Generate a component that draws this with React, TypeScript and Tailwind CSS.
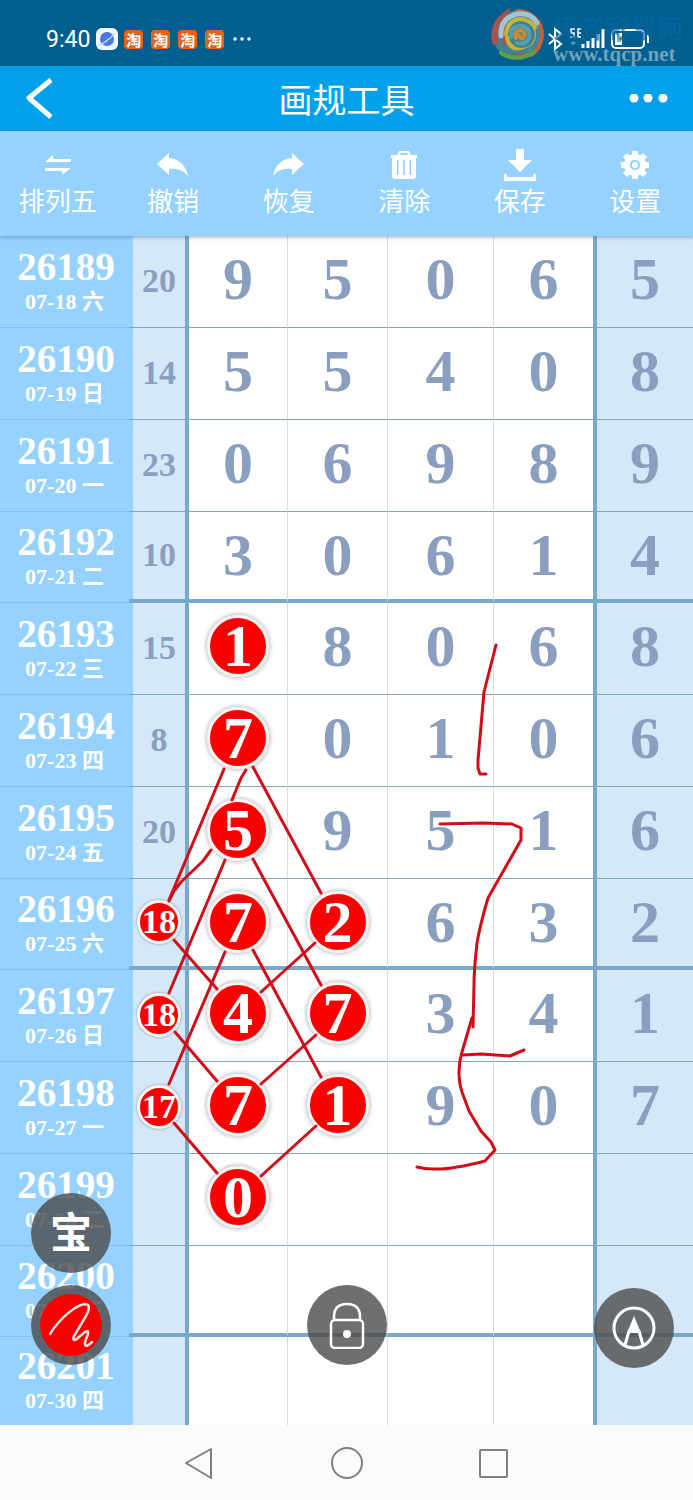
import type { ReactNode } from 'react';
import clsx from 'clsx';

interface DrawRow {
  issue: string;
  date: string;
  sum?: number;
  sumMarked?: boolean;
  digits: (number | null)[];
  marked?: number[];
}

const ROWS: DrawRow[] = [
  { issue: '26189', date: '07-18 六', sum: 20, digits: [9, 5, 0, 6, 5] },
  { issue: '26190', date: '07-19 日', sum: 14, digits: [5, 5, 4, 0, 8] },
  { issue: '26191', date: '07-20 一', sum: 23, digits: [0, 6, 9, 8, 9] },
  { issue: '26192', date: '07-21 二', sum: 10, digits: [3, 0, 6, 1, 4] },
  { issue: '26193', date: '07-22 三', sum: 15, digits: [1, 8, 0, 6, 8], marked: [0] },
  { issue: '26194', date: '07-23 四', sum: 8, digits: [7, 0, 1, 0, 6], marked: [0] },
  { issue: '26195', date: '07-24 五', sum: 20, digits: [5, 9, 5, 1, 6], marked: [0] },
  { issue: '26196', date: '07-25 六', sum: 18, sumMarked: true, digits: [7, 2, 6, 3, 2], marked: [0, 1] },
  { issue: '26197', date: '07-26 日', sum: 18, sumMarked: true, digits: [4, 7, 3, 4, 1], marked: [0, 1] },
  { issue: '26198', date: '07-27 一', sum: 17, sumMarked: true, digits: [7, 1, 9, 0, 7], marked: [0, 1] },
  { issue: '26199', date: '07-28 二', digits: [0, null, null, null, null], marked: [0] },
  { issue: '26200', date: '07-29 三', digits: [null, null, null, null, null] },
  { issue: '26201', date: '07-30 四', digits: [null, null, null, null, null] },
];

// straight links between marked numbers: x1, y1, x2, y2
const LINKS = [
  [224, 769, 169, 900],
  [253, 767, 321, 893],
  [225, 860, 169, 993],
  [253, 859, 321, 985],
  [174, 940, 217, 989],
  [315, 943, 261, 992],
  [225, 952, 169, 1084],
  [253, 950, 321, 1077],
  [175, 1032, 217, 1081],
  [316, 1035, 261, 1084],
  [174, 1123, 217, 1173],
  [316, 1126, 261, 1176],
];

const STROKES = [
  'M246 770 L241 778 L232 800',
  'M211 850 L203 861 L181 882 L174 891 L169 901',
  'M496 645 L484 692 L478 760 L478 768 L480 774 H486',
  'M440 824 L483 823 L512 824 L521 828 V840 L488 898 Q480 925 477 943 Q474 970 474 985 L473 1027',
  'M472 1018 L462 1052 Q459 1062 459 1072 Q459 1083 462 1092 L469 1111 L481 1131 L491 1142 L495 1150 L485 1161 Q450 1170 433 1169 Q424 1169 417 1167',
  'M463 1055 L481 1054 L510 1056 L524 1050',
];

const TOOLS: { label: string; icon: ReactNode }[] = [
  {
    label: '排列五',
    icon: <path d="M3 12 L11 5 V9 H29 V12 Z M29 18 L20 25 V21 H3 V18 Z" />,
  },
  {
    label: '撤销',
    icon: <path d="M0 14 L12 3 V8 C23 9 29 16 31 26 C26 20 20 18 12 19 V25 Z" />,
  },
  {
    label: '恢复',
    icon: <path d="M31 14 L19 3 V8 C8 9 2 16 0 26 C5 20 11 18 19 19 V25 Z" />,
  },
  {
    label: '清除',
    icon: (
      <path
        fillRule="evenodd"
        d="M3 5 H9 L11 1 H21 L23 5 H29 V8 H28 V26 Q28 29 25 29 H7 Q4 29 4 26 V8 H3 Z M12 5 H20 L19 3 H13 Z M9 10 V25 H10.500 V10 Z M15.200 10 V25 H16.800 V10 Z M21.500 10 V25 H23 V10 Z"
      />
    ),
  },
  {
    label: '保存',
    icon: <path d="M12 -1 H20 V10 H28 L16 22 L4 10 H12 Z M0 24 H3 V27 H29 V24 H32 V31 H0 Z" />,
  },
  {
    label: '设置',
    icon: (
      <>
        <g stroke="white" strokeWidth="6">
          <path d="M16 1 V8 M16 22 V29 M2 15 H9 M23 15 H30" />
          <path d="M6 5 L11 10 M21 20 L26 25 M26 5 L21 10 M11 20 L6 25" />
        </g>
        <circle cx="16" cy="15" r="8" fill="none" stroke="white" strokeWidth="6" />
        <circle cx="16" cy="15" r="5" fill="#96d2ff" />
        <circle cx="16" cy="15" r="3" />
      </>
    ),
  },
];

function StatusBar() {
  return (
    <div className="relative flex h-[66px] items-center bg-[#005f8f] pl-[46px] pt-3 text-white">
      <span className="font-[Roboto,sans-serif] text-[23px] leading-none">9:40</span>
      <svg viewBox="0 0 22 22" className="ml-[6px] size-[22px]">
        <rect width="22" height="22" rx="6" fill="#f3f8ff" />
        <circle cx="11" cy="11" r="7" fill="#4a78e0" />
        <path d="M3 17 Q10 15 19 5" stroke="#c3d6ff" strokeWidth="1.500" fill="none" />
      </svg>
      <div className="ml-[6px] flex gap-2">
        {[0, 1, 2, 3].map((i) => (
          <span
            key={i}
            className="flex size-[19px] items-center justify-center rounded bg-[#e0651a] font-['Noto_Sans_CJK_SC',sans-serif] text-[15px] font-bold leading-none"
          >
            淘
          </span>
        ))}
      </div>
      <svg viewBox="0 0 18 4" className="ml-[9px] h-1 w-[18px]" fill="white">
        <circle cx="2" cy="2" r="1.700" />
        <circle cx="9" cy="2" r="1.700" />
        <circle cx="16" cy="2" r="1.700" />
      </svg>

      <div className="ml-auto mr-[42px] flex items-center">
        <svg viewBox="0 0 104 24" className="h-6 w-[104px]" fill="none" stroke="white">
          <path d="M2 7 L14 17 L8 22 V2 L14 7 L2 17" strokeWidth="2" />
          <g strokeWidth="1.500">
            <path d="M28 2 H24 V6 H27 V10 H23 M34 2 H31 V10 H34 M31 6 H34" />
            <path d="M24 16 H29 M26 14 V18" stroke="#7fb0cc" strokeWidth="1" />
          </g>
          <path d="M36 21 V17 M41 21 V14 M46 21 V11 M51 21 V7 M56 21 V2" strokeWidth="3" />
          <rect x="65" y="3" width="32" height="18" rx="4" strokeWidth="2" />
          <path d="M101 8 V16" strokeWidth="2" />
          <rect x="68" y="6" width="7" height="12" fill="white" stroke="none" />
          <path d="M71 9 V15 M73 9 V15" stroke="#005f8f" strokeWidth="1" />
        </svg>
      </div>

      <div className="pointer-events-none absolute right-[10px] top-2 flex">
        <svg viewBox="0 0 54 54" className="size-[54px]" fill="none" strokeLinecap="round">
          <circle cx="27" cy="27" r="25" fill="#45808a" />
          <path d="M27 3 A24 24 0 0 1 51 27 Q50 41 40 47" stroke="#c4623c" strokeWidth="4" />
          <path d="M4 34 Q1 16 14 7 Q10 20 13 30 Q18 44 32 46" stroke="#a8524d" strokeWidth="6" />
          <path d="M10 28 Q9 10 26 6 Q40 4 46 15" stroke="#9fc5d6" strokeWidth="5" />
          <path d="M15 26 Q17 11 31 11 Q45 14 46 27 Q44 42 29 42 Q17 40 16 29" stroke="#c3b63b" strokeWidth="4" />
          <path d="M20 29 Q19 17 31 18 Q40 21 38 30 Q34 38 26 35" stroke="#4fa0b5" strokeWidth="4" />
          <path d="M25 30 Q22 23 30 22 Q36 25 32 30 Q29 31 28 27" stroke="#c98a32" strokeWidth="4" />
          <path d="M10 45 Q25 55 43 44" stroke="#5ba04c" strokeWidth="4" />
          <path d="M14 38 Q24 50 42 38 Q48 31 46 22" stroke="#3a86a8" strokeWidth="3" />
        </svg>
        <div className="ml-2 flex flex-col pt-1">
          <span className="font-['Noto_Sans_CJK_SC',sans-serif] text-[26px] font-bold leading-[30px] text-[#08659f]/70">
            天齐彩票网
          </span>
          <span className="font-['Liberation_Serif',serif] text-[21px] font-bold leading-6 text-[#8fb5c9]/80">
            www.tqcp.net
          </span>
        </div>
      </div>
    </div>
  );
}

function TitleBar() {
  return (
    <header className="flex h-[65px] items-center justify-between bg-[#00a0ea] px-6 text-white">
      <button type="button" aria-label="返回" className="w-10">
        <svg viewBox="0 0 32 44" className="h-11 w-8" fill="none" stroke="white" strokeWidth="5">
          <path d="M27 3 L5 21 L27 40" strokeLinejoin="round" />
        </svg>
      </button>
      <h1 className="text-[34px] leading-none">画规工具</h1>
      <button type="button" aria-label="更多" className="w-10">
        <svg viewBox="0 0 40 10" className="h-[10px] w-10" fill="white">
          <circle cx="5" cy="4" r="4.500" />
          <circle cx="19" cy="4" r="4.500" />
          <circle cx="34" cy="4" r="4.500" />
        </svg>
      </button>
    </header>
  );
}

function Toolbar() {
  return (
    <div className="relative z-10 grid h-[105px] grid-cols-6 bg-[#96d2ff] text-white shadow-[0_1px_4px_rgba(70,110,150,0.6)]">
      {TOOLS.map((tool) => (
        <button key={tool.label} type="button" className="flex flex-col items-center pt-[19px]">
          <svg viewBox="0 0 32 30" className="h-[30px] w-8 overflow-visible" fill="white">
            {tool.icon}
          </svg>
          <span className="mt-0.5 text-[26px] leading-9">{tool.label}</span>
        </button>
      ))}
    </div>
  );
}

function Digit({ value, marked }: { value: number | null; marked?: boolean }) {
  if (value === null) return null;
  return (
    <span
      className={clsx(
        'mx-auto flex size-[62px] items-center justify-center text-[60px] leading-none',
        marked && 'rounded-full border-3 border-[#fff4f2] bg-[#fb0000] text-white shadow-[0_0_4px_1px_rgba(90,110,120,0.45)]',
      )}
    >
      {value}
    </span>
  );
}

function TrendTable() {
  return (
    <table className="w-full table-fixed border-separate border-spacing-0 bg-white text-center font-['Liberation_Serif','Noto_Sans_CJK_SC',serif] font-bold text-[#8a9fbf]">
      <colgroup>
        <col className="w-[129px]" />
        <col className="w-[60px]" />
        <col className="w-[99px]" />
        <col className="w-[100px]" />
        <col className="w-[106px]" />
        <col className="w-[103px]" />
        <col className="w-[96px]" />
      </colgroup>
      <tbody>
        {ROWS.map((row, index) => {
          const last = index === ROWS.length - 1;
          const thick = index % 4 === 3;
          const line = last ? 'border-b-0' : thick ? 'border-b-4 border-b-[#7aa8c9]' : 'border-b border-b-[#7fa6bf]';
          return (
            <tr key={row.issue} className={last ? 'h-[88px]' : thick ? 'h-[91px]' : 'h-[92px]'}>
              <th
                scope="row"
                className={clsx('bg-[#96d2ff] p-0 text-white', !last && 'border-b border-b-[#85c0ec]')}
              >
                <span className="block pl-[3px] text-[39px] leading-10">{row.issue}</span>
                <span className="block text-[22px] leading-[30px]">{row.date}</span>
              </th>
              <td
                className={clsx(
                  'border-r-4 border-r-[#7aa8c9] bg-[#d4e8fa] p-0 pb-0.5 pl-1 text-[34px] shadow-[inset_4px_0_0_#96d2ff]',
                  line,
                )}
              >
                <span
                  className={clsx(
                    'mx-auto flex size-[44px] items-center justify-center leading-none',
                    row.sumMarked &&
                      'rounded-full border-3 border-[#fff4f2] bg-[#fb0000] text-white shadow-[0_0_2px_1px_rgba(90,110,120,0.35)]',
                  )}
                >
                  {row.sum}
                </span>
              </td>
              {row.digits.map((value, column) => (
                <td
                  key={column}
                  className={clsx(
                    'p-0',
                    thick ? 'pb-0.5' : 'pb-1.5',
                    line,
                    column < 3 && 'border-r border-r-[#d3dee3]',
                    column === 3 && 'border-r-4 border-r-[#7aa8c9]',
                    column === 4 && 'bg-[#d4e8fa]',
                  )}
                >
                  <Digit value={value} marked={row.marked?.includes(column)} />
                </td>
              ))}
            </tr>
          );
        })}
      </tbody>
    </table>
  );
}

function Drawing() {
  return (
    <svg
      viewBox="0 236 693 1189"
      preserveAspectRatio="none"
      className="pointer-events-none absolute inset-0 size-full"
      fill="none"
      stroke="#d10d18"
      strokeWidth="3"
      strokeLinecap="round"
      strokeLinejoin="round"
    >
      {LINKS.map(([x1, y1, x2, y2]) => (
        <line key={`${x1}-${y1}-${x2}`} x1={x1} y1={y1} x2={x2} y2={y2} />
      ))}
      {STROKES.map((d) => (
        <path key={d} d={d} />
      ))}
    </svg>
  );
}

function FloatingButtons() {
  return (
    <>
      <div className="absolute bottom-[60px] left-[31px] flex flex-col gap-3">
        <button
          type="button"
          className="size-20 rounded-full bg-[#4b4b4b]/80 pb-1.5 text-[42px] font-bold leading-none text-white"
        >
          宝
        </button>
        <button
          type="button"
          aria-label="画笔"
          className="flex size-20 items-center justify-center rounded-full bg-[#4b4b4b]/80"
        >
          <svg viewBox="0 0 62 62" className="size-[62px]">
            <circle cx="31" cy="31" r="31" fill="#fb0000" />
            <path
              d="M10 40 C20 24 36 11 45 10 C51 10 49 17 46 22 L34 42 C32 47 35 47 39 43 L45 38 C50 35 48 41 46 45 C43 54 47 53 52 48"
              fill="none"
              stroke="#ffe3df"
              strokeWidth="2.500"
              strokeLinecap="round"
            />
          </svg>
        </button>
      </div>
      <button
        type="button"
        aria-label="锁定"
        className="absolute bottom-[60px] left-1/2 flex size-20 -translate-x-1/2 items-center justify-center rounded-full bg-[#4b4b4b]/80"
      >
        <svg viewBox="0 0 36 48" className="h-12 w-9" fill="none" stroke="white" strokeWidth="2.500">
          <rect x="2" y="19" width="32" height="28" rx="4" />
          <path d="M5 19 V16 Q5 3 18 3 Q31 3 31 16 V19" />
          <circle cx="18" cy="33" r="4" fill="white" stroke="none" />
        </svg>
      </button>
      <button
        type="button"
        aria-label="指南针"
        className="absolute bottom-[57px] right-[19px] flex size-20 items-center justify-center rounded-full bg-[#4b4b4b]/80"
      >
        <svg viewBox="0 0 44 44" className="size-11" fill="none" stroke="white" strokeWidth="3">
          <circle cx="22" cy="22" r="20" />
          <path d="M17 25 L13 39 M27 25 L31 39" />
          <path d="M22 10 L29 27 H15 Z" fill="white" stroke="none" />
        </svg>
      </button>
    </>
  );
}

function SystemNav() {
  return (
    <nav className="flex grow items-center justify-center bg-[#fbfbfb] py-5">
      <button type="button" aria-label="后退" className="flex w-[147px] justify-center">
        <svg viewBox="0 0 34 34" className="size-[34px]" fill="none" stroke="#808080" strokeWidth="2">
          <path d="M3 17 L28 3 V32 Z" strokeLinejoin="round" />
        </svg>
      </button>
      <button type="button" aria-label="主页" className="flex w-[147px] justify-center">
        <svg viewBox="0 0 34 34" className="size-[34px]" fill="none" stroke="#808080" strokeWidth="2">
          <circle cx="17" cy="17" r="15" />
        </svg>
      </button>
      <button type="button" aria-label="最近任务" className="flex w-[147px] justify-center">
        <svg viewBox="0 0 34 34" className="size-[34px]" fill="none" stroke="#808080" strokeWidth="2">
          <rect x="3" y="4" width="27" height="27" rx="1" />
        </svg>
      </button>
    </nav>
  );
}

export default function App() {
  return (
    <div className="flex min-h-screen flex-col font-['Noto_Sans_CJK_SC',sans-serif]">
      <StatusBar />
      <TitleBar />
      <Toolbar />
      <main className="relative">
        <TrendTable />
        <Drawing />
        <FloatingButtons />
      </main>
      <SystemNav />
    </div>
  );
}
